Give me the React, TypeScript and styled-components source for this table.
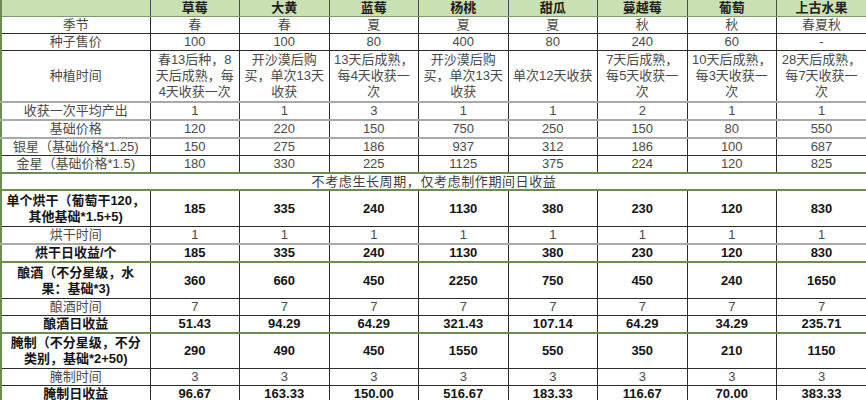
import React from 'react'
import styled, { createGlobalStyle } from 'styled-components'

const GlobalStyle = createGlobalStyle`
  html, body {
    margin: 0;
    padding: 0;
    background: #ffffff;
  }
`

type Line = 'dark' | 'gray' | 'green'

type RowData = {
  label: React.ReactNode
  cells: React.ReactNode[]
  h: number
  bold?: boolean
  line?: Line
}

const fruits = ['草莓', '大黄', '蓝莓', '杨桃', '甜瓜', '蔓越莓', '葡萄', '上古水果']

const desert = (
  <>
    开沙漠后购
    <br />
    买，单次13天
    <br />
    收获
  </>
)

const ripe = (a: number, b: number) => (
  <>
    {a}天后成熟，
    <br />
    每{b}天收获一
    <br />
    次
  </>
)

const topRows: RowData[] = [
  { label: '季节', cells: ['春', '春', '夏', '夏', '夏', '秋', '秋', '春夏秋'], h: 17 },
  { label: '种子售价', cells: ['100', '100', '80', '400', '80', '240', '60', '-'], h: 17 },
  {
    label: '种植时间',
    cells: [
      <>
        春13后种，8
        <br />
        天后成熟，每
        <br />
        4天收获一次
      </>,
      desert,
      ripe(13, 4),
      desert,
      '单次12天收获',
      ripe(7, 5),
      ripe(10, 3),
      ripe(28, 7),
    ],
    h: 52,
    line: 'gray',
  },
  { label: '收获一次平均产出', cells: ['1', '1', '3', '1', '1', '2', '1', '1'], h: 17, line: 'gray' },
  { label: '基础价格', cells: ['120', '220', '150', '750', '250', '150', '80', '550'], h: 17, line: 'gray' },
  {
    label: '银星（基础价格*1.25)',
    cells: ['150', '275', '186', '937', '312', '186', '100', '687'],
    h: 16,
  },
  {
    label: '金星（基础价格*1.5)',
    cells: ['180', '330', '225', '1125', '375', '224', '120', '825'],
    h: 17,
    line: 'green',
  },
]

const bottomRows: RowData[] = [
  {
    label: (
      <>
        单个烘干（葡萄干120，
        <br />
        其他基础*1.5+5)
      </>
    ),
    cells: ['185', '335', '240', '1130', '380', '230', '120', '830'],
    h: 36,
    bold: true,
  },
  { label: '烘干时间', cells: Array(8).fill('1'), h: 18, line: 'gray' },
  {
    label: '烘干日收益/个',
    cells: ['185', '335', '240', '1130', '380', '230', '120', '830'],
    h: 17,
    bold: true,
    line: 'green',
  },
  {
    label: (
      <>
        酿酒（不分星级，水
        <br />
        果：基础*3)
      </>
    ),
    cells: ['360', '660', '450', '2250', '750', '450', '240', '1650'],
    h: 36,
    bold: true,
  },
  { label: '酿酒时间', cells: Array(8).fill('7'), h: 16 },
  {
    label: '酿酒日收益',
    cells: ['51.43', '94.29', '64.29', '321.43', '107.14', '64.29', '34.29', '235.71'],
    h: 17,
    bold: true,
    line: 'green',
  },
  {
    label: (
      <>
        腌制（不分星级，不分
        <br />
        类别，基础*2+50)
      </>
    ),
    cells: ['290', '490', '450', '1550', '550', '350', '210', '1150'],
    h: 35,
    bold: true,
  },
  { label: '腌制时间', cells: Array(8).fill('3'), h: 17 },
  {
    label: '腌制日收益',
    cells: ['96.67', '163.33', '150.00', '516.67', '183.33', '116.67', '70.00', '383.33'],
    h: 16,
    bold: true,
    line: 'green',
  },
]

function renderRow(row: RowData, i: number) {
  return (
    <Row key={i} $h={row.h} $line={row.line ?? 'dark'}>
      <Cell $bold={row.bold}>{row.label}</Cell>
      {row.cells.map((c, j) => (
        <Cell key={j} $bold={row.bold}>
          {c}
        </Cell>
      ))}
    </Row>
  )
}

function App() {
  return (
    <>
      <GlobalStyle />
      <Sheet>
        <colgroup>
          <col style={{ width: 149 }} />
          {fruits.map((f) => (
            <col key={f} />
          ))}
        </colgroup>
        <tbody>
          <HeaderRow>
            <HeadCell />
            {fruits.map((f) => (
              <HeadCell key={f}>{f}</HeadCell>
            ))}
          </HeaderRow>
          {topRows.map(renderRow)}
          <Row $h={17} $line="green">
            <Banner colSpan={9}>不考虑生长周期，仅考虑制作期间日收益</Banner>
          </Row>
          {bottomRows.map(renderRow)}
        </tbody>
      </Sheet>
    </>
  )
}

export default App

// styles

const lineWidth: Record<Line, number> = { dark: 1, gray: 2, green: 2 }

const lineColor: Record<Line, string> = {
  dark: '#2c2c2c',
  gray: '#a9a9a9',
  green: '#6d8b55',
}

const Sheet = styled.table`
  width: 866px;
  table-layout: fixed;
  border-collapse: collapse;
  border-left: 2px solid #6d8b55;
  font-family: 'Liberation Sans', 'Noto Sans CJK SC', sans-serif;
`

const HeaderRow = styled.tr`
  background: #c9e0b3;

  > td {
    height: 16px;
    border-bottom: 1px solid #7f9a6e;
  }
`

const HeadCell = styled.td`
  padding: 0;
  border-left: 1px solid #4a4a4a;
  text-align: center;
  font-size: 13px;
  line-height: 16px;
  font-weight: 700;
  color: #1e1e1e;
`

const Row = styled.tr<{ $h: number; $line: Line }>`
  > td {
    height: ${(p) => p.$h - lineWidth[p.$line]}px;
    border-bottom: ${(p) => `${lineWidth[p.$line]}px solid ${lineColor[p.$line]}`};
  }
`

const Cell = styled.td<{ $bold?: boolean }>`
  padding: 0;
  border-left: 1px solid #2c2c2c;
  text-align: center;
  vertical-align: middle;
  white-space: nowrap;
  font-size: 13px;
  line-height: 16px;
  font-weight: ${(p) => (p.$bold ? 700 : 400)};
  color: ${(p) => (p.$bold ? '#151515' : '#4a4a4a')};
`

const Banner = styled.td`
  padding: 0;
  text-align: center;
  font-size: 13px;
  line-height: 15px;
  letter-spacing: 0.6px;
  color: #3c3c3c;
`
